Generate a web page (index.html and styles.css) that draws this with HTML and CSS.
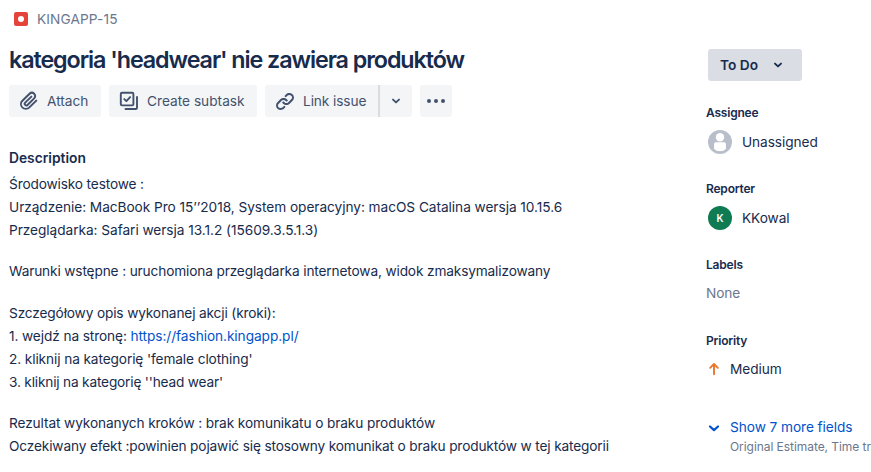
FILE: index.html
```html
<!DOCTYPE html>
<html lang="pl">
<head>
<meta charset="utf-8">
<title>KINGAPP-15</title>
<link rel="stylesheet" href="styles.css">
</head>
<body>
<div class="issue">
  <main class="main">
    <div class="crumb">
      <svg width="14" height="14" viewBox="0 0 14 14"><rect width="14" height="14" rx="2" fill="#e5443a"/><circle cx="7" cy="7" r="3" fill="#fff"/></svg>
      <span class="key">KINGAPP-15</span>
    </div>
    <h1>kategoria 'headwear' nie zawiera produktów</h1>
    <div class="toolbar">
      <button class="btn attach">
        <svg width="24" height="24" viewBox="0 0 24 24"><path fill="currentColor" d="M11.643 17.965c-1.53 1.495-4.016 1.496-5.542.004a3.773 3.773 0 0 1 .002-5.412l7.147-6.985a2.316 2.316 0 0 1 3.233-.003c.893.873.895 2.282.004 3.153l-6.703 6.55a.653.653 0 0 1-.914-.008.62.62 0 0 1 0-.902l6.229-6.087a.941.941 0 0 0 0-1.353.995.995 0 0 0-1.384 0l-6.23 6.087a2.502 2.502 0 0 0 0 3.607 2.643 2.643 0 0 0 3.683.009l6.703-6.55a4.188 4.188 0 0 0-.005-6.06 4.307 4.307 0 0 0-6 .003l-7.148 6.985a5.655 5.655 0 0 0-.001 8.118c2.29 2.237 6.015 2.238 8.308-.004l6.994-6.835a.94.94 0 0 0 0-1.353.994.994 0 0 0-1.384 0l-6.992 6.836z"/></svg>
        <span>Attach</span>
      </button>
      <button class="btn subtask">
        <svg width="24" height="24" viewBox="0 0 24 24" fill="none" stroke="currentColor" stroke-width="1.9" stroke-linejoin="round" stroke-linecap="round"><rect x="3.8" y="3.8" width="12.6" height="12.6" rx="1.2"/><path d="M7.3 10.1l2.1 2.1 3.7-4.1M20 8v10.700a1.300 1.300 0 0 1-1.300 1.300H8.500"/></svg>
        <span>Create subtask</span>
      </button>
      <div class="split">
        <button class="btn link">
          <svg width="24" height="24" viewBox="0 0 24 24"><g fill="currentColor"><path d="M12.856 5.457l-.937.92a1.002 1.002 0 0 0 0 1.437 1.047 1.047 0 0 0 1.463 0l.984-.966c.967-.95 2.542-1.135 3.602-.288a2.54 2.54 0 0 1 .203 3.81l-2.903 2.852a2.646 2.646 0 0 1-3.696 0l-1.11-1.09L9 13.57l1.108 1.089c1.822 1.788 4.802 1.788 6.622 0l2.905-2.852a4.558 4.558 0 0 0-.357-6.82c-1.893-1.517-4.695-1.226-6.422.47"/><path d="M11.144 19.543l.937-.92a1.002 1.002 0 0 0 0-1.437 1.047 1.047 0 0 0-1.462 0l-.985.966c-.967.95-2.542 1.135-3.602.288a2.54 2.54 0 0 1-.203-3.81l2.903-2.852a2.646 2.646 0 0 1 3.696 0l1.11 1.09L15 11.43l-1.108-1.089c-1.822-1.788-4.802-1.788-6.622 0l-2.905 2.852a4.558 4.558 0 0 0 .357 6.82c1.893 1.517 4.695 1.226 6.422-.47"/></g></svg>
          <span>Link issue</span>
        </button>
        <button class="btn more"><svg width="10" height="8" viewBox="0 0 10 8" class="chev"><path d="M2 2.6l3 2.8 3-2.8"/></svg></button>
      </div>
      <button class="btn dots"><svg width="20" height="6" viewBox="0 0 20 6" fill="currentColor"><circle cx="3" cy="3" r="2"/><circle cx="10" cy="3" r="2"/><circle cx="17" cy="3" r="2"/></svg></button>
    </div>
    <h2>Description</h2>
    <div class="text">
      <p>Środowisko testowe :<br><span class="loose">Urządzenie: MacBook Pro 15’’2018, System operacyjny: macOS Catalina wersja 10.15.6<br>Przeglądarka: Safari wersja 13.1.2 (15609.3.5.1.3)</span></p>
      <p>Warunki wstępne : uruchomiona przeglądarka internetowa, widok zmaksymalizowany</p>
      <p>Szczegółowy opis wykonanej akcji (kroki):<br><span class="mid">1. wejdź na stronę: <a>https://fashion.kingapp.pl/</a><br>2. kliknij na kategorię 'female clothing'</span><br><span class="tight">3. kliknij na kategorię ''head wear'</span></p>
      <p><span class="mid">Rezultat wykonanych kroków : brak komunikatu o braku produktów</span><br>Oczekiwany efekt :powinien pojawić się stosowny komunikat o braku produktów w tej kategorii</p>
    </div>
  </main>
  <aside class="side">
    <button class="status"><span>To Do</span><svg width="10" height="8" viewBox="0 0 10 8" class="chev"><path d="M2 2.6l3 2.8 3-2.8"/></svg></button>
    <section class="field">
      <h3>Assignee</h3>
      <div class="value person"><svg width="24" height="24" viewBox="0 0 24 24"><circle cx="12" cy="12" r="12" fill="#b9bfca"/><circle cx="12" cy="7.2" r="4.2" fill="#fff"/><path fill="#fff" d="M6 14.2a1.9 1.9 0 0 1 1.9-1.9h8.2a1.9 1.9 0 0 1 1.9 1.9v3.9c0 2-3 3.1-6 3.1s-6-1.100-6-3.100z"/></svg><span>Unassigned</span></div>
    </section>
    <section class="field">
      <h3>Reporter</h3>
      <div class="value person"><span class="avatar">K</span><span>KKowal</span></div>
    </section>
    <section class="field">
      <h3>Labels</h3>
      <div class="value none">None</div>
    </section>
    <section class="field">
      <h3>Priority</h3>
      <div class="value priority"><svg width="16" height="16" viewBox="0 0 16 16" fill="none" stroke="#e9762b" stroke-width="1.9" stroke-linecap="round" stroke-linejoin="round"><path d="M8 13.200V3.200M4.200 6.800L8 3l3.800 3.800"/></svg><span>Medium</span></div>
    </section>
    <div class="show">
      <svg width="16" height="16" viewBox="0 0 16 16" fill="none" stroke="#0052cc" stroke-width="2.200" stroke-linecap="round" stroke-linejoin="round"><path d="M4 6.500l4 3.600 4-3.600"/></svg>
      <div><div class="show-title">Show 7 more fields</div><div class="show-sub">Original Estimate, Time tracking</div></div>
    </div>
  </aside>
</div>
</body>
</html>
```
FILE: styles.css
```css
* { box-sizing: border-box; }
body { margin: 0; width: 871px; height: 472px; overflow: hidden; background: #fff; color: #172b4d; font: 13.7px/23px Inter, "Liberation Sans", sans-serif; }
h1, h2, h3, p { margin: 0; }
svg { display: block; flex: none; }
button { border: 0; padding: 0; margin: 0; font: inherit; color: inherit; background: none; }
.issue { display: flex; height: 472px; overflow: hidden; }
.main { width: 706px; padding: 8px 0 0 9px; flex: none; white-space: nowrap; }
.crumb { display: flex; align-items: center; gap: 9px; height: 22px; padding-left: 5px; color: #6b778c; }
.key { letter-spacing: 0.1px; padding-top: 1px; }
h1 { margin-top: 16px; height: 28px; font-size: 23.3px; line-height: 28px; font-weight: 600; letter-spacing: -1.08px; }
.toolbar { display: flex; gap: 8px; margin-top: 11px; height: 32px; }
.btn { display: flex; align-items: center; height: 32px; background: #f4f5f7; border-radius: 3px; color: #42526e; white-space: nowrap; }
.btn > span { padding-top: 1px; }
.btn > svg:first-child:not(.chev) { margin-right: 6px; }
.attach { width: 92px; padding-left: 8px; }
.subtask { width: 148px; padding-left: 8px; }
.split { display: flex; width: 147px; }
.link { width: 113px; padding-left: 8px; border-radius: 3px 0 0 3px; letter-spacing: -0.1px; }
.more { flex: 1; justify-content: center; border-left: 2px solid #d8dce2; border-radius: 0 3px 3px 0; }
.dots { width: 32px; justify-content: center; }
.btn.dots > svg:first-child { margin: 0; }
.chev { fill: none; stroke: currentColor; stroke-width: 1.9; stroke-linecap: round; stroke-linejoin: round; }
h2 { margin-top: 31px; font-size: 13.8px; line-height: 20px; font-weight: 600; }
.text { display: flex; flex-direction: column; gap: 18.4px; margin-top: 5px; letter-spacing: -0.15px; }
.loose { letter-spacing: -0.055px; }
.mid { letter-spacing: -0.11px; }
.tight { letter-spacing: -0.19px; }
a { color: #0052cc; letter-spacing: -0.07px; }
.side { flex: 1; min-width: 0; padding-top: 49px; white-space: nowrap; }
.status { display: flex; align-items: center; gap: 15px; width: 94px; height: 32px; margin: 0 0 22px 2px; padding-left: 12px; background: #dadde3; border-radius: 3px; font-weight: 600; }
.status span { padding-top: 1px; }
.field { height: 76px; }
h3 { font-size: 12px; line-height: 20px; font-weight: 600; letter-spacing: -0.2px; }
.value { display: flex; align-items: center; height: 24px; margin-top: 7px; letter-spacing: -0.08px; }
.value > svg + span, .avatar + span { padding-top: 1px; }
.person { padding-left: 2px; gap: 10px; }
.avatar { width: 24px; height: 24px; border-radius: 50%; background: #0f7b52; color: #fff; font-size: 10px; font-weight: 600; line-height: 24px; text-align: center; margin-top: -1px; }
.none { color: #6b778c; height: 22px; }
.priority { gap: 8px; height: 22px; }
.show { display: flex; gap: 8px; margin-top: 9px; }
.show > svg { margin-top: 4px; }
.show-title { color: #0052cc; line-height: 22px; letter-spacing: -0.07px; }
.show-sub { color: #6b778c; font-size: 12px; line-height: 18px; letter-spacing: -0.06px; }
```
